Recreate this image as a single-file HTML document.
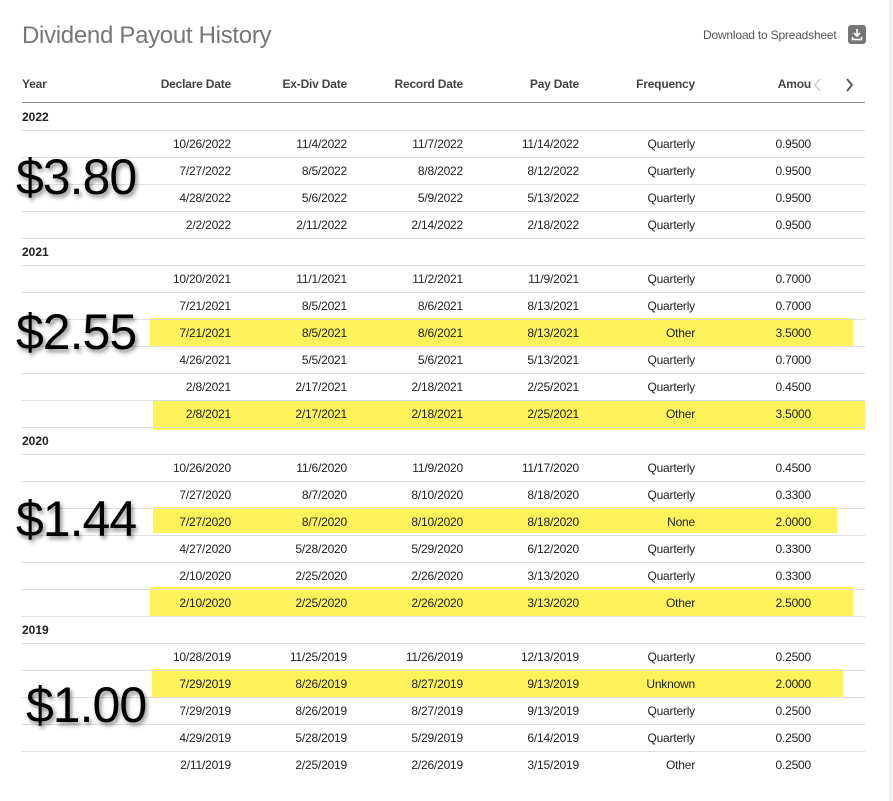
<!DOCTYPE html>
<html><head><meta charset="utf-8"><style>
*{margin:0;padding:0;box-sizing:border-box}
body{width:893px;height:801px;background:#fff;position:relative;overflow:hidden;font-family:"Liberation Sans",sans-serif;color:#222}
.rp{position:absolute;left:889px;top:0;width:4px;height:801px;background:#eef0f2}
.t{position:absolute;left:22px;top:22px;font-size:24px;color:#777;letter-spacing:-0.3px}
.dl{position:absolute;left:703px;top:28px;font-size:12px;color:#555;letter-spacing:-0.2px}
.di{position:absolute;left:848px;top:25px;width:18px;height:19px;background:#777;border-radius:3px}
.c{position:absolute;font-size:12px;text-align:right;letter-spacing:-0.2px;white-space:nowrap}
.h{font-weight:bold;color:#444}
.ln{position:absolute;left:22px;width:843px;height:1px;background:#ddd}
.y{position:absolute;left:22px;font-size:12px;font-weight:bold;color:#222}
.hl{position:absolute;background:#fef35a}
.big{position:absolute;font-size:50px;color:#000;letter-spacing:-1px;text-shadow:2px 3px 4px rgba(0,0,0,.45)}
</style></head><body>
<div class="rp"></div>
<div class="t">Dividend Payout History</div>
<div class="dl">Download to Spreadsheet</div>
<div class="di"><svg width="18" height="19" viewBox="0 0 18 19"><path d="M9 4v7M6 8l3 3 3-3M4.5 12v2.5h9V12" stroke="#fff" stroke-width="1.6" fill="none"/></svg></div>
<div class="hl" style="left:150px;top:318px;width:703px;height:29px"></div>
<div class="hl" style="left:153px;top:400px;width:712px;height:30px"></div>
<div class="hl" style="left:153px;top:507px;width:684px;height:26px"></div>
<div class="hl" style="left:150px;top:587px;width:703px;height:29px"></div>
<div class="hl" style="left:152px;top:669px;width:691px;height:28px"></div>
<div id="g"></div>
<svg style="position:absolute;left:812px;top:77px" width="12" height="16"><path d="M8 2L3 8l5 6" stroke="#ccc" stroke-width="1.6" fill="none"/></svg>
<svg style="position:absolute;left:843px;top:77px" width="12" height="16"><path d="M4 2l5 6-5 6" stroke="#555" stroke-width="1.8" fill="none"/></svg>
<div class="ln" style="top:102px;height:1px;background:#888"></div>
<script>
var g=document.getElementById('g'),h='';
var R=[231,347,463,579,695,811];
function row(top,v,hd){for(var i=0;i<6;i++){h+='<div class="c'+(hd?' h':'')+'" style="top:'+(top+7)+'px;right:'+(893-R[i])+'px">'+v[i]+'</div>';}}
row(70,['Declare Date','Ex-Div Date','Record Date','Pay Date','Frequency','Amou'],1);
h+='<div class="c h" style="top:77px;left:22px;text-align:left">Year</div>';
var D=[['2022',[['10/26/2022','11/4/2022','11/7/2022','11/14/2022','Quarterly','0.9500'],['7/27/2022','8/5/2022','8/8/2022','8/12/2022','Quarterly','0.9500'],['4/28/2022','5/6/2022','5/9/2022','5/13/2022','Quarterly','0.9500'],['2/2/2022','2/11/2022','2/14/2022','2/18/2022','Quarterly','0.9500']]],
['2021',[['10/20/2021','11/1/2021','11/2/2021','11/9/2021','Quarterly','0.7000'],['7/21/2021','8/5/2021','8/6/2021','8/13/2021','Quarterly','0.7000'],['7/21/2021','8/5/2021','8/6/2021','8/13/2021','Other','3.5000'],['4/26/2021','5/5/2021','5/6/2021','5/13/2021','Quarterly','0.7000'],['2/8/2021','2/17/2021','2/18/2021','2/25/2021','Quarterly','0.4500'],['2/8/2021','2/17/2021','2/18/2021','2/25/2021','Other','3.5000']]],
['2020',[['10/26/2020','11/6/2020','11/9/2020','11/17/2020','Quarterly','0.4500'],['7/27/2020','8/7/2020','8/10/2020','8/18/2020','Quarterly','0.3300'],['7/27/2020','8/7/2020','8/10/2020','8/18/2020','None','2.0000'],['4/27/2020','5/28/2020','5/29/2020','6/12/2020','Quarterly','0.3300'],['2/10/2020','2/25/2020','2/26/2020','3/13/2020','Quarterly','0.3300'],['2/10/2020','2/25/2020','2/26/2020','3/13/2020','Other','2.5000']]],
['2019',[['10/28/2019','11/25/2019','11/26/2019','12/13/2019','Quarterly','0.2500'],['7/29/2019','8/26/2019','8/27/2019','9/13/2019','Unknown','2.0000'],['7/29/2019','8/26/2019','8/27/2019','9/13/2019','Quarterly','0.2500'],['4/29/2019','5/28/2019','5/29/2019','6/14/2019','Quarterly','0.2500'],['2/11/2019','2/25/2019','2/26/2019','3/15/2019','Other','0.2500']]]];
var y=103;
D.forEach(function(s,si){
 h+='<div class="y" style="top:'+(y+7)+'px">'+s[0]+'</div>';
 y+=27;
 s[1].forEach(function(r,ri){
  h+='<div class="ln" style="top:'+y+'px"></div>';
  row(y,r,0);y+=27;
 });
 if(si<3)h+='<div class="ln" style="top:'+y+'px"></div>';
});
g.innerHTML=h;
</script>
<div class="big" style="left:16px;top:148px">$3.80</div>
<div class="big" style="left:16px;top:303px">$2.55</div>
<div class="big" style="left:16px;top:490px">$1.44</div>
<div class="big" style="left:26px;top:676px">$1.00</div>
</body></html>
